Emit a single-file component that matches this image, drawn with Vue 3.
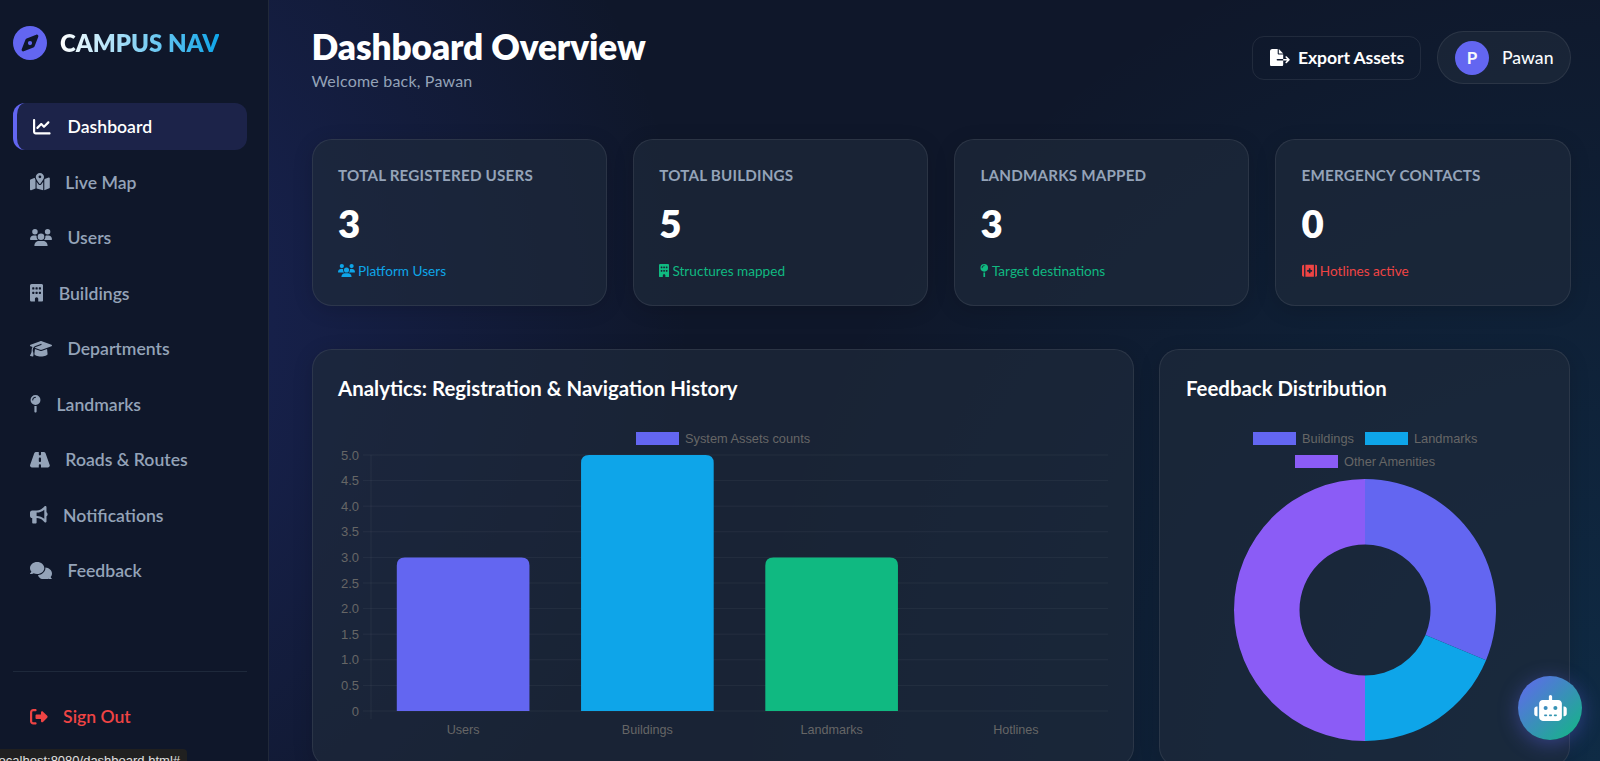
<script setup>
const navItems = [
  { label: 'Dashboard', w: 512, icon: 'chart', active: true },
  { label: 'Live Map', w: 576, icon: 'map' },
  { label: 'Users', w: 640, icon: 'users' },
  { label: 'Buildings', w: 384, icon: 'building' },
  { label: 'Departments', w: 640, icon: 'cap' },
  { label: 'Landmarks', w: 320, icon: 'pin' },
  { label: 'Roads & Routes', w: 576, icon: 'road' },
  { label: 'Notifications', w: 512, icon: 'bullhorn' },
  { label: 'Feedback', w: 640, icon: 'comments' }
]

const icons = {
  chart: 'M64 64c0-17.7-14.3-32-32-32S0 46.3 0 64V400c0 44.2 35.8 80 80 80H480c17.7 0 32-14.3 32-32s-14.3-32-32-32H80c-8.8 0-16-7.2-16-16V64zm406.6 86.6c12.5-12.5 12.5-32.8 0-45.3s-32.8-12.5-45.3 0L320 210.7l-57.4-57.4c-12.5-12.5-32.8-12.5-45.3 0l-112 112c-12.5 12.5-12.5 32.8 0 45.3s32.8 12.5 45.3 0L240 221.3l57.4 57.4c12.5 12.5 32.8 12.5 45.3 0l128-128z',
  map: 'M408 120c0 54.6-73.1 151.9-105.2 192c-7.7 9.6-22 9.6-29.6 0C241.1 271.9 168 174.6 168 120C168 53.7 221.7 0 288 0s120 53.7 120 120zm8 80.4c3.5-6.9 6.7-13.8 9.6-20.6c.5-1.2 1-2.5 1.5-3.7l116-46.4C558.9 123.4 576 135 576 152V422.8c0 9.8-6 18.6-15.1 22.3L416 503V200.4zM137.6 138.3c2.4 14.1 7.2 28.3 12.8 41.5c2.9 6.8 6.1 13.7 9.6 20.6V451.8L32.9 502.7C17.1 509 0 497.4 0 480.4V209.6c0-9.8 6-18.6 15.1-22.3l122.6-49zM327.8 332c13.9-17.4 35.7-45.7 56.2-77V504.3L192 449.4V255c20.5 31.3 42.3 59.6 56.2 77c20.5 25.6 59.1 25.6 79.6 0zM288 152a40 40 0 1 0 0-80 40 40 0 1 0 0 80z',
  users: 'M144 0a80 80 0 1 1 0 160A80 80 0 1 1 144 0zM512 0a80 80 0 1 1 0 160A80 80 0 1 1 512 0zM0 298.7C0 239.8 47.8 192 106.7 192h42.7c15.9 0 31 3.5 44.6 9.7c-1.3 7.2-1.9 14.7-1.9 22.3c0 38.2 16.8 72.5 43.3 96c-.2 0-.4 0-.7 0H21.3C9.6 320 0 310.4 0 298.7zM405.3 320c-.2 0-.4 0-.7 0c26.6-23.5 43.3-57.8 43.3-96c0-7.6-.7-15-1.9-22.3c13.6-6.3 28.7-9.7 44.6-9.7h42.7C592.2 192 640 239.8 640 298.7c0 11.8-9.6 21.3-21.3 21.3H405.3zM224 224a96 96 0 1 1 192 0 96 96 0 1 1 -192 0zM128 485.3C128 411.7 187.7 352 261.3 352H378.7C452.3 352 512 411.7 512 485.3c0 14.7-11.9 26.7-26.7 26.7H154.7c-14.7 0-26.7-11.9-26.7-26.7z',
  building: 'M48 0C21.5 0 0 21.5 0 48V464c0 26.5 21.5 48 48 48h96V432c0-26.5 21.5-48 48-48s48 21.5 48 48v80h96c26.5 0 48-21.5 48-48V48c0-26.5-21.5-48-48-48H48zM64 240c0-8.8 7.2-16 16-16h32c8.8 0 16 7.2 16 16v32c0 8.8-7.2 16-16 16H80c-8.8 0-16-7.2-16-16V240zm112-16h32c8.8 0 16 7.2 16 16v32c0 8.8-7.2 16-16 16H176c-8.8 0-16-7.2-16-16V240c0-8.8 7.2-16 16-16zm80 16c0-8.8 7.2-16 16-16h32c8.8 0 16 7.2 16 16v32c0 8.8-7.2 16-16 16H272c-8.8 0-16-7.2-16-16V240zM80 96h32c8.8 0 16 7.2 16 16v32c0 8.8-7.2 16-16 16H80c-8.8 0-16-7.2-16-16V112c0-8.8 7.2-16 16-16zm80 16c0-8.8 7.2-16 16-16h32c8.8 0 16 7.2 16 16v32c0 8.8-7.2 16-16 16H176c-8.8 0-16-7.2-16-16V112zM272 96h32c8.8 0 16 7.2 16 16v32c0 8.8-7.2 16-16 16H272c-8.8 0-16-7.2-16-16V112c0-8.8 7.2-16 16-16z',
  cap: 'M320 32c-8.1 0-16.1 1.4-23.7 4.1L15.8 137.4C6.3 140.9 0 149.9 0 160s6.3 19.1 15.8 22.6l57.9 20.9C57.3 229.3 48 259.8 48 291.9v28.1c0 28.4-10.8 57.7-22.3 80.8c-6.5 13-13.9 25.8-22.5 37.6C0 442.7-.9 448.3 .9 453.4s6 8.9 11.2 10.2l64 16c4.2 1.1 8.7 .3 12.4-2s6.3-6.1 7.1-10.4c8.6-42.8 4.3-81.2-2.1-108.7C90.3 344.3 86 329.8 80 316.5V291.9c0-30.2 10.2-58.7 27.9-81.5c12.9-15.5 29.6-28 49.2-35.7l157-61.7c8.2-3.2 17.5 .8 20.7 9s-.8 17.5-9 20.7l-157 61.7c-12.4 4.9-23.3 12.4-32.2 21.6l159.6 57.6c7.6 2.7 15.6 4.1 23.7 4.1s16.1-1.4 23.7-4.1L624.2 182.6c9.5-3.4 15.8-12.5 15.8-22.6s-6.3-19.1-15.8-22.6L343.7 36.1C336.1 33.4 328.1 32 320 32zM128 408c0 35.3 86 72 192 72s192-36.7 192-72L496.7 262.6 354.5 314c-11.1 4-22.8 6-34.5 6s-23.5-2-34.5-6L143.3 262.6 128 408z',
  pin: 'M16 144a144 144 0 1 1 288 0A144 144 0 1 1 16 144zM160 80c8.8 0 16-7.2 16-16s-7.2-16-16-16c-53 0-96 43-96 96c0 8.8 7.2 16 16 16s16-7.2 16-16c0-35.3 28.7-64 64-64zM128 480V317.1c10.4 1.9 21.1 2.9 32 2.9s21.6-1 32-2.9V480c0 17.7-14.3 32-32 32s-32-14.3-32-32z',
  road: 'M256 32H181.2c-27.1 0-51.3 17.1-60.3 42.6L3.1 407.2C1.1 413 0 419.2 0 425.4C0 455.5 24.5 480 54.6 480H256V416c0-17.7 14.3-32 32-32s32 14.3 32 32v64H521.4c30.2 0 54.6-24.5 54.6-54.6c0-6.2-1.1-12.4-3.1-18.2L455.1 74.6C446 49.1 421.9 32 394.8 32H320V96c0 17.7-14.3 32-32 32s-32-14.3-32-32V32zm64 192v64c0 17.7-14.3 32-32 32s-32-14.3-32-32V224c0-17.7 14.3-32 32-32s32 14.3 32 32z',
  bullhorn: 'M480 32c0-12.9-7.8-24.6-19.8-29.6s-25.7-2.2-34.9 6.9L381.7 53c-48 48-113.1 75-181 75H192 160 64c-35.3 0-64 28.7-64 64v96c0 35.3 28.7 64 64 64l0 128c0 17.7 14.3 32 32 32h64c17.7 0 32-14.3 32-32V352l8.7 0c67.9 0 133 27 181 75l43.6 43.6c9.2 9.2 22.9 11.9 34.9 6.9s19.8-16.6 19.8-29.6V300.4c18.6-8.8 32-32.5 32-60.4s-13.4-51.6-32-60.4V32zm-64 76.7V240 371.3C357.2 317.8 280.5 288 200.7 288H192V192h8.7c79.8 0 156.5-29.8 215.3-83.3z',
  comments: 'M208 352c114.9 0 208-78.8 208-176S322.9 0 208 0S0 78.8 0 176c0 38.6 14.7 74.3 39.6 103.4c-3.5 9.4-8.7 17.7-14.2 24.7c-4.8 6.2-9.7 11-13.3 14.3c-1.8 1.6-3.3 2.9-4.3 3.7c-.5 .4-.9 .7-1.1 .8l-.2 .2 0 0 0 0C1 327.2-1.4 334.4 .8 340.9S9.1 352 16 352c21.8 0 43.8-5.6 62.1-12.5c9.2-3.5 17.8-7.4 25.3-11.4C134.1 343.3 169.8 352 208 352zM448 176c0 112.3-99.1 196.9-216.5 207C255.8 457.4 336.4 512 432 512c38.2 0 73.9-8.7 104.7-23.9c7.5 4 16 7.9 25.2 11.4c18.3 6.9 40.3 12.5 62.1 12.5c6.9 0 13.1-4.5 15.2-11.1c2.1-6.6-.2-13.8-5.8-17.9l0 0 0 0-.2-.2c-.2-.2-.6-.4-1.1-.8c-1-.8-2.5-2-4.3-3.7c-3.6-3.3-8.5-8.1-13.3-14.3c-5.5-7-10.7-15.4-14.2-24.7c24.9-29 39.6-64.7 39.6-103.4c0-92.8-84.9-168.9-192.6-175.5c.4 5.1 .6 10.3 .6 15.5z',
  signout: 'M377.9 105.9L500.7 228.7c7.2 7.2 11.3 17.1 11.3 27.3s-4.1 20.1-11.3 27.3L377.9 406.1c-6.4 6.4-15 9.9-24 9.9c-18.7 0-33.9-15.2-33.9-33.9l0-62.1-128 0c-17.7 0-32-14.3-32-32l0-64c0-17.7 14.3-32 32-32l128 0 0-62.1c0-18.7 15.2-33.9 33.9-33.9c9 0 17.6 3.6 24 9.9zM160 96L96 96c-17.7 0-32 14.3-32 32l0 256c0 17.7 14.3 32 32 32l64 0c17.7 0 32 14.3 32 32s-14.3 32-32 32l-64 0c-53 0-96-43-96-96L0 128C0 75 43 32 96 32l64 0c17.7 0 32 14.3 32 32s-14.3 32-32 32z',
  compass: 'M256 512A256 256 0 1 0 256 0a256 256 0 1 0 0 512zm50.7-186.9L162.4 380.6c-19.4 7.5-38.5-11.6-31-31l55.5-144.3c3.3-8.5 9.9-15.1 18.4-18.4l144.3-55.5c19.4-7.5 38.5 11.6 31 31L325.1 306.7c-3.2 8.5-9.9 15.1-18.4 18.4zM288 256a32 32 0 1 0 -64 0 32 32 0 1 0 64 0z',
  fileExport: 'M0 64C0 28.7 28.7 0 64 0H224V128c0 17.7 14.3 32 32 32H384V288H216c-13.3 0-24 10.7-24 24s10.7 24 24 24H384V448c0 35.3-28.7 64-64 64H64c-35.3 0-64-28.7-64-64V64zM384 336V288H494.1l-39-39c-9.4-9.4-9.4-24.6 0-33.9s24.6-9.4 33.9 0l80 80c9.4 9.4 9.4 24.6 0 33.9l-80 80c-9.4 9.4-24.6 9.4-33.9 0s-9.4-24.6 0-33.9l39-39H384zm0-208H256V0L384 128z',
  kit: 'M64 32C28.7 32 0 60.7 0 96V416c0 35.3 28.7 64 64 64H80V32H64zm64 0V480H448V32H128zM512 480c35.3 0 64-28.7 64-64V96c0-35.3-28.7-64-64-64H496V480h16zM256 176c0-8.8 7.2-16 16-16h32c8.8 0 16 7.2 16 16v48h48c8.8 0 16 7.2 16 16v32c0 8.8-7.2 16-16 16H320v48c0 8.8-7.2 16-16 16H272c-8.8 0-16-7.2-16-16V288H208c-8.8 0-16-7.2-16-16V240c0-8.8 7.2-16 16-16h48V176z',
  robot: 'M320 0c17.7 0 32 14.3 32 32V96H472c39.8 0 72 32.2 72 72V440c0 39.8-32.2 72-72 72H168c-39.8 0-72-32.2-72-72V168c0-39.8 32.2-72 72-72H288V32c0-17.7 14.3-32 32-32zM208 384c-8.8 0-16 7.2-16 16s7.2 16 16 16h32c8.8 0 16-7.2 16-16s-7.2-16-16-16H208zm96 0c-8.8 0-16 7.2-16 16s7.2 16 16 16h32c8.8 0 16-7.2 16-16s-7.2-16-16-16H304zm96 0c-8.8 0-16 7.2-16 16s7.2 16 16 16h32c8.8 0 16-7.2 16-16s-7.2-16-16-16H400zM264 256a40 40 0 1 0 -80 0 40 40 0 1 0 80 0zm152 40a40 40 0 1 0 0-80 40 40 0 1 0 0 80zM48 224H64V416H48c-26.5 0-48-21.5-48-48V272c0-26.5 21.5-48 48-48zm544 0c26.5 0 48 21.5 48 48v96c0 26.5-21.5 48-48 48H576V224h16z'
}

const stats = [
  { title: 'TOTAL REGISTERED USERS', value: 3, note: 'Platform Users', icon: 'users', w: 640, cls: 'blue' },
  { title: 'TOTAL BUILDINGS', value: 5, note: 'Structures mapped', icon: 'building', w: 384, cls: 'green' },
  { title: 'LANDMARKS MAPPED', value: 3, note: 'Target destinations', icon: 'pin', w: 320, cls: 'green' },
  { title: 'EMERGENCY CONTACTS', value: 0, note: 'Hotlines active', icon: 'kit', w: 576, cls: 'red' }
]

// bar chart, sizes in chart pixels
const bars = [
  { label: 'Users', value: 3, color: '#6366f1' },
  { label: 'Buildings', value: 5, color: '#0ea5e9' },
  { label: 'Landmarks', value: 3, color: '#10b981' },
  { label: 'Hotlines', value: 0, color: '#ef4444' }
]
const plot = { left: 59, right: 796, top: 105, bottom: 361 }
const slot = (plot.right - plot.left) / 4
const barW = slot * 0.72
const ticks = Array.from({ length: 11 }, (_, i) => i * 0.5)
const yFor = v => plot.bottom - (v / 5) * (plot.bottom - plot.top)

function barPath(i, v) {
  const x = plot.left + slot * i + (slot - barW) / 2
  const y = yFor(v)
  const r = 8
  return `M${x} ${plot.bottom}V${y + r}Q${x} ${y} ${x + r} ${y}H${x + barW - r}Q${x + barW} ${y} ${x + barW} ${y + r}V${plot.bottom}Z`
}

// donut, center and radius in chart pixels
const donut = { cx: 206, cy: 260, r: 131, inner: 65.5 }
const slices = [
  { value: 5, color: '#6366f1' },
  { value: 3, color: '#0ea5e9' },
  { value: 8, color: '#8b5cf6' }
]
function slicePath(from, to) {
  const { cx, cy, r, inner } = donut
  const pt = (a, rad) => `${cx + rad * Math.sin(a)} ${cy - rad * Math.cos(a)}`
  const large = to - from > Math.PI ? 1 : 0
  return `M${pt(from, r)}A${r} ${r} 0 ${large} 1 ${pt(to, r)}L${pt(to, inner)}A${inner} ${inner} 0 ${large} 0 ${pt(from, inner)}Z`
}
const total = slices.reduce((s, x) => s + x.value, 0)
let acc = 0
const donutPaths = slices.map(s => {
  const from = (acc / total) * Math.PI * 2
  acc += s.value
  return { d: slicePath(from, (acc / total) * Math.PI * 2), color: s.color }
})
</script>

<template>
  <div class="page">
    <aside class="sidebar">
      <div class="brand">
        <svg class="brand-icon" viewBox="0 0 512 512"><path :d="icons.compass" /></svg>
        <span class="brand-text">CAMPUS NAV</span>
      </div>
      <nav class="nav">
        <a v-for="item in navItems" :key="item.label" class="nav-item" :class="{ active: item.active }" href="#">
          <svg class="ico" :viewBox="`0 0 ${item.w} 512`" :style="{ width: item.w / 512 * 17.6 + 'px' }"><path :d="icons[item.icon]" /></svg>
          <span>{{ item.label }}</span>
        </a>
      </nav>
      <div class="sidebar-foot">
        <a class="nav-item signout" href="#">
          <svg class="ico" viewBox="0 0 512 512" style="width: 17.6px"><path :d="icons.signout" /></svg>
          <span>Sign Out</span>
        </a>
      </div>
    </aside>

    <main class="main">
      <header class="top">
        <div>
          <h1>Dashboard Overview</h1>
          <p class="welcome">Welcome back, Pawan</p>
        </div>
        <div class="top-actions">
          <button class="export">
            <svg viewBox="0 0 576 512"><path :d="icons.fileExport" /></svg>
            Export Assets
          </button>
          <div class="user-pill">
            <span class="avatar">P</span>
            <span class="user-name">Pawan</span>
          </div>
        </div>
      </header>

      <section class="stats">
        <div v-for="s in stats" :key="s.title" class="card stat">
          <div class="stat-title">{{ s.title }}</div>
          <div class="stat-value">{{ s.value }}</div>
          <div class="stat-note" :class="s.cls">
            <svg :viewBox="`0 0 ${s.w} 512`" :style="{ width: s.w / 512 * 13.6 + 'px' }"><path :d="icons[s.icon]" /></svg>
            {{ s.note }}
          </div>
        </div>
      </section>

      <section class="charts">
        <div class="card chart-card">
          <h3>Analytics: Registration &amp; Navigation History</h3>
          <svg class="chart-svg" viewBox="0 0 822 420" width="822" height="420">
            <rect x="324" y="82" width="43" height="13" fill="#6366f1" />
            <text x="373" y="92.5" class="chart-txt legend">System Assets counts</text>
            <g v-for="t in ticks" :key="t">
              <line :x1="plot.left - 8" :x2="plot.right" :y1="yFor(t)" :y2="yFor(t)" class="grid" />
              <text :x="plot.left - 12" :y="yFor(t) + 4.5" text-anchor="end" class="chart-txt tick">{{ t === 0 ? '0' : t.toFixed(1) }}</text>
            </g>
            <line :x1="plot.left" :x2="plot.left" :y1="plot.top" :y2="plot.bottom + 8" class="grid" />
            <g v-for="(b, i) in bars" :key="b.label">
              <path v-if="b.value" :d="barPath(i, b.value)" :fill="b.color" />
              <text :x="plot.left + slot * (i + 0.5)" :y="plot.bottom + 23" text-anchor="middle" class="chart-txt">{{ b.label }}</text>
            </g>
          </svg>
        </div>
        <div class="card chart-card">
          <h3>Feedback Distribution</h3>
          <svg class="chart-svg" viewBox="0 0 410 420" width="410" height="420">
            <rect x="94" y="82" width="43" height="13" fill="#6366f1" />
            <text x="143" y="92.5" class="chart-txt legend">Buildings</text>
            <rect x="206" y="82" width="43" height="13" fill="#0ea5e9" />
            <text x="255" y="92.5" class="chart-txt legend">Landmarks</text>
            <rect x="136" y="105" width="43" height="13" fill="#8b5cf6" />
            <text x="185" y="116" class="chart-txt legend">Other Amenities</text>
            <path v-for="p in donutPaths" :key="p.color" :d="p.d" :fill="p.color" />
          </svg>
        </div>
      </section>
    </main>

    <button class="bot">
      <svg viewBox="0 0 640 512"><path :d="icons.robot" /></svg>
    </button>
    <div class="status"><span>http://localhost:8080/dashboard.html#</span></div>
  </div>
</template>

<style>
html, body {
  margin: 0;
  height: 100%;
  overflow: hidden;
  background: #0f172a;
}
</style>

<style scoped>
* {
  box-sizing: border-box;
}

.page {
  position: relative;
  display: flex;
  height: 761px;
  overflow: hidden;
  font-family: Lato, "Noto Sans", sans-serif;
  color: #f8fafc;
  background:
    radial-gradient(circle 690px at 0 320px, rgba(60, 80, 240, 0.26), transparent),
    radial-gradient(circle 860px at 100% 100%, rgba(14, 165, 233, 0.14), transparent),
    #0f172a;
}

.sidebar {
  width: 269px;
  flex-shrink: 0;
  padding: 26px 21px 0 13px;
  display: flex;
  flex-direction: column;
  background: #0f172a;
  border-right: 1px solid rgba(255, 255, 255, 0.08);
}

.brand {
  display: flex;
  align-items: center;
  gap: 13px;
  margin-bottom: 43px;
}

.brand-icon {
  width: 34px;
  height: 34px;
  fill: #6366f1;
}

.brand-text {
  padding-bottom: 2px;
  font-size: 24px;
  font-weight: 800;
  background: linear-gradient(90deg, #fff, #0ea5e9);
  -webkit-background-clip: text;
  background-clip: text;
  color: transparent;
}

.nav {
  display: flex;
  flex-direction: column;
  gap: 8.5px;
}

.nav-item {
  display: flex;
  align-items: center;
  gap: 15.5px;
  height: 47px;
  padding-left: 17px;
  border-radius: 12px;
  color: #94a3b8;
  font-size: 17.6px;
  font-weight: 600;
  text-decoration: none;
}

.nav-item.active {
  gap: 17px;
  padding-left: 16px;
  color: #fff;
  background: #1c2349;
  border-left: 4px solid #6366f1;
}

.ico {
  height: 17.6px;
  flex-shrink: 0;
  fill: currentColor;
}

.sidebar-foot {
  margin-top: auto;
  margin-bottom: 21px;
  padding-top: 21px;
  border-top: 1px solid #1e293b;
}

.signout {
  color: #ef4444;
}

.main {
  flex: 1;
  min-width: 0;
  padding: 25px 29.5px 0 42.5px;
}

.top {
  display: flex;
  justify-content: space-between;
  align-items: flex-start;
  height: 114px;
}

h1 {
  margin: 0;
  font-size: 35.2px;
  letter-spacing: -0.1px;
  line-height: 42px;
  font-weight: 800;
  color: #fff;
}

.welcome {
  margin: 4px 0 0;
  font-size: 16px;
  letter-spacing: 0.2px;
  color: #94a3b8;
}

.top-actions {
  display: flex;
  align-items: center;
  gap: 15.5px;
  margin-top: 6px;
}

.export {
  display: flex;
  align-items: center;
  gap: 8px;
  height: 44px;
  padding: 0 16.4px 0 17.6px;
  font: inherit;
  font-size: 17.6px;
  letter-spacing: -0.1px;
  font-weight: 700;
  color: #fff;
  background: transparent;
  border: 1px solid rgba(255, 255, 255, 0.08);
  border-radius: 12px;
}

.export svg {
  width: 19.8px;
  height: 17.6px;
  fill: currentColor;
}

.user-pill {
  display: flex;
  align-items: center;
  gap: 13px;
  height: 53px;
  padding: 0 16px 0 17px;
  background: rgba(30, 41, 59, 0.7);
  border: 1px solid rgba(255, 255, 255, 0.08);
  border-radius: 27px;
}

.avatar {
  width: 34px;
  height: 34px;
  border-radius: 50%;
  display: flex;
  align-items: center;
  justify-content: center;
  background: #6366f1;
  font-weight: 700;
  font-size: 17px;
}

.user-name {
  font-size: 17.6px;
  font-weight: 500;
}

.stats {
  display: grid;
  grid-template-columns: repeat(4, 1fr);
  gap: 25.6px;
}

.card {
  background: rgba(30, 41, 59, 0.7);
  border: 1px solid rgba(255, 255, 255, 0.08);
  border-radius: 20px;
  box-shadow: 0 4px 20px rgba(0, 0, 0, 0.15);
}

.stat {
  height: 167px;
  padding: 25px 25.6px 0;
}

.stat-title {
  font-size: 15.2px;
  font-weight: 700;
  letter-spacing: 0.2px;
  line-height: 20px;
  color: #94a3b8;
}

.stat-value {
  margin-top: 15px;
  font-size: 38.4px;
  line-height: 47px;
  font-weight: 800;
  color: #fff;
}

.stat-note {
  display: flex;
  align-items: center;
  gap: 3px;
  margin-top: 15.5px;
  font-size: 13.6px;
}

.stat-note svg {
  height: 13.6px;
  fill: currentColor;
}

.blue { color: #0ea5e9; }
.green { color: #10b981; }
.red { color: #ef4444; }

.charts {
  display: grid;
  grid-template-columns: 2fr 1fr;
  gap: 25.6px;
  margin-top: 43px;
}

.chart-card {
  height: 418px;
  padding: 25.5px 25.6px;
  overflow: hidden;
}

h3 {
  margin: 0;
  font-size: 20.4px;
  line-height: 24px;
  font-weight: 700;
  color: #fff;
}

/* svg origin sits on the card's inner corner */
.chart-svg {
  display: block;
  margin: -49.5px 0 0 -26.6px;
}

.chart-txt {
  font-family: "Liberation Sans", Arial, sans-serif;
  font-size: 12.6px;
  fill: #666;
}

.chart-txt.legend {
  font-size: 12.8px;
}

.chart-txt.tick {
  font-size: 13px;
}

.grid {
  stroke: rgba(255, 255, 255, 0.05);
  stroke-width: 1;
}

.bot {
  position: fixed;
  right: 18px;
  bottom: 21px;
  width: 64px;
  height: 64px;
  border: none;
  border-radius: 50%;
  display: flex;
  align-items: center;
  justify-content: center;
  background: linear-gradient(135deg, #6366f1, #10b981);
  box-shadow: 0 4px 20px rgba(99, 102, 241, 0.4);
}

.bot svg {
  width: 33px;
  height: 26px;
  fill: #fff;
}

.status {
  position: fixed;
  left: 0;
  bottom: 0;
  width: 187px;
  height: 12px;
  padding: 4px 7px 0 0;
  overflow: hidden;
  display: flex;
  justify-content: flex-end;
  font-family: "Liberation Sans", sans-serif;
  font-size: 13px;
  line-height: 15px;
  color: #e0e0e0;
  background: #202020;
  border-top-right-radius: 4px;
}

.status span {
  flex-shrink: 0;
  white-space: nowrap;
}
</style>
